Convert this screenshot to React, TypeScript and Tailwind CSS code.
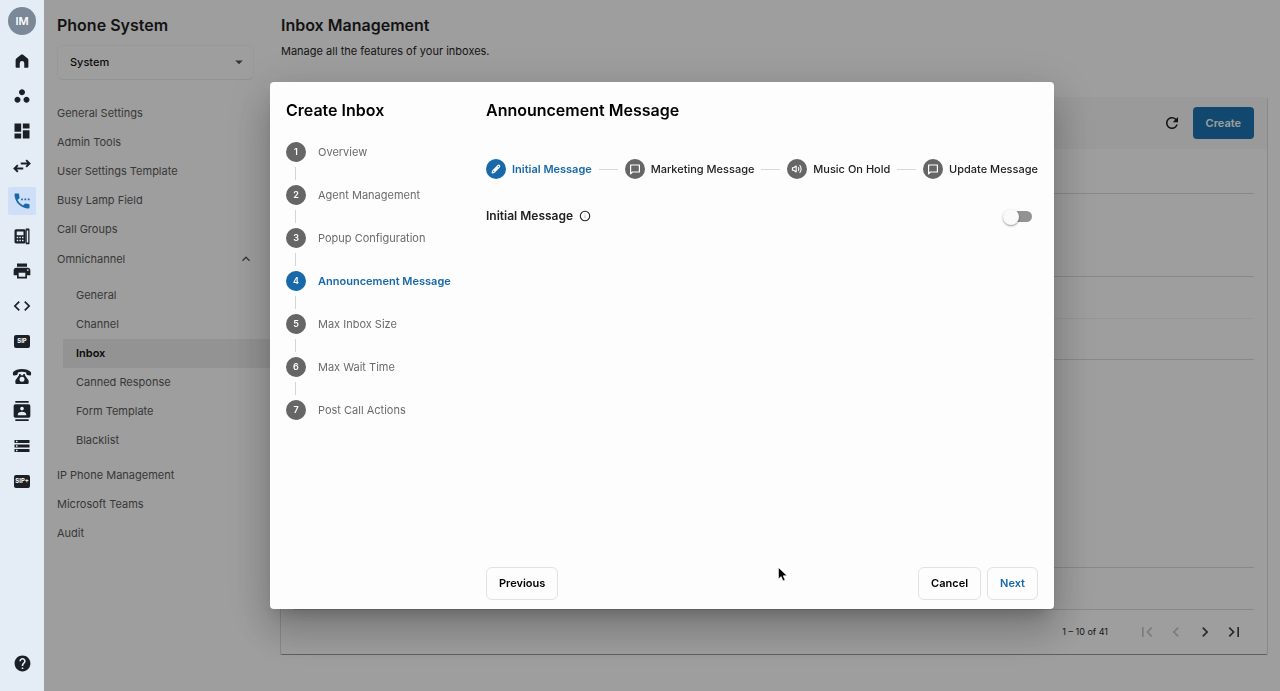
import { Fragment, useState, type ReactNode } from 'react';
import {
  MdArrowDropDown,
  MdChevronLeft,
  MdChevronRight,
  MdCode,
  MdContacts,
  MdDashboard,
  MdExpandLess,
  MdFirstPage,
  MdHelp,
  MdLastPage,
  MdPrint,
  MdRefresh,
  MdSettingsPhone,
  MdStorage,
  MdWorkspaces,
} from 'react-icons/md';

function HomeIcon() {
  return (
    <svg viewBox="0 0 24 24" className="size-[18px]" fill="currentColor">
      <path d="M3.500 10.500c0-.8.3-1.400.9-1.900l6.100-4.800c.9-.7 2.100-.7 3 0l6.100 4.800c.6.500.9 1.100.9 1.900V20c0 .6-.4 1-1 1h-4.500v-6a3 3 0 0 0-6 0v6H4.500c-.6 0-1-.4-1-1z" />
    </svg>
  );
}

function SwapIcon() {
  return (
    <svg viewBox="0 0 24 24" className="size-5" fill="none" stroke="currentColor" strokeWidth="2.300">
      <path d="M10.500 9H21M17 5l4 4-4 4M13.500 15H3M7 11l-4 4 4 4" />
    </svg>
  );
}

function DeskPhoneIcon() {
  return (
    <svg viewBox="0 0 24 24" className="size-[18px]" fill="currentColor">
      <path
        fillRule="evenodd"
        d="M4 3h11c1 0 2 1 2 2v15c0 1-1 2-2 2H4c-1 0-2-1-2-2V5c0-1 1-2 2-2zm1 3v5h9V6zm0 7v2h2v-2zm3.500 0v2h2v-2zm3.500 0v2h2v-2zM5 17v2h2v-2zm3.500 0v2h2v-2zm3.500 0v2h2v-2z"
      />
      <path fillRule="evenodd" d="M17 2h3.500c1 0 1.500.6 1.500 1.500v18c0 .9-.5 1.500-1.500 1.500H17zm1.300 2.500v16h2v-16z" />
    </svg>
  );
}

function TelephoneIcon() {
  return (
    <svg viewBox="0 0 24 24" className="size-5" fill="currentColor">
      <path d="M12 3.500c4.800 0 8.400 1.300 10.300 3.500.7.800.9 1.900.6 2.900l-.3.800c-.2.600-.8.900-1.400.8l-3-.7c-.7-.2-1.100-.7-1.100-1.400V7.800a16 16 0 0 0-10.200 0v1.600c0 .7-.4 1.200-1.100 1.400l-3 .7c-.6.100-1.200-.2-1.400-.8l-.3-.8c-.3-1-.1-2.100.6-2.900C3.600 4.800 7.200 3.500 12 3.500z" />
      <path
        fillRule="evenodd"
        d="M8.500 9.500h2V11h3V9.500h2V11l4.500 6.500V20a1.500 1.500 0 0 1-1.500 1.500h-13A1.500 1.500 0 0 1 4 20v-2.500L8.500 11zm3.500 3.500a3 3 0 1 0 0 6 3 3 0 0 0 0-6z"
      />
    </svg>
  );
}

function PencilIcon() {
  return (
    <svg viewBox="0 0 12 12" className="size-3" fill="none" stroke="currentColor" strokeWidth="1.200" strokeLinejoin="round">
      <path d="M2.200 9.800l.5-2 5.300-5.300c.4-.4 1-.4 1.400 0s.4 1 0 1.500L4.200 9.300zM4 7.900l3.800-3.800" />
    </svg>
  );
}

function BubbleIcon() {
  return (
    <svg viewBox="0 0 12 12" className="size-3" fill="none" stroke="currentColor" strokeWidth="1.200" strokeLinejoin="round">
      <path d="M1.600 10.800V2h8.800v7H3.400z" />
    </svg>
  );
}

function SpeakerIcon() {
  return (
    <svg viewBox="0 0 12 12" className="size-3" fill="none" stroke="currentColor" strokeWidth="1.100" strokeLinejoin="round">
      <path d="M1.400 4.800h1.300L5.200 3v6L2.700 7.200H1.400zM7.200 4.200c.8.800.8 2.800 0 3.600M8.600 2.200c2 2 2 5.600 0 7.600" />
    </svg>
  );
}

function InfoIcon() {
  return (
    <svg viewBox="0 0 12 12" className="size-3" fill="none" stroke="currentColor">
      <circle cx="6" cy="6" r="4.700" strokeWidth="1.100" />
      <path d="M6 5.200v3M6 3.600v.8" strokeWidth="0.800" opacity="0.350" />
    </svg>
  );
}

function SipBadge({ children }: { children: string }) {
  return (
    <span className="flex h-[13px] w-4 items-center justify-center rounded-xs bg-[#1b2027] text-[6px] leading-none font-bold text-white">
      {children}
    </span>
  );
}

const RAIL: { label: string; icon: ReactNode; active?: boolean }[] = [
  { label: 'Home', icon: <HomeIcon /> },
  { label: 'Workspaces', icon: <MdWorkspaces size={18} /> },
  { label: 'Dashboard', icon: <MdDashboard size={20} /> },
  { label: 'Transfers', icon: <SwapIcon /> },
  { label: 'Phone System', icon: <MdSettingsPhone size={20} />, active: true },
  { label: 'Desk Phones', icon: <DeskPhoneIcon /> },
  { label: 'Fax', icon: <MdPrint size={20} /> },
  { label: 'Developer', icon: <MdCode size={20} /> },
  { label: 'SIP Trunks', icon: <SipBadge>SIP</SipBadge> },
  { label: 'Telephones', icon: <TelephoneIcon /> },
  { label: 'Contacts', icon: <MdContacts size={20} /> },
  { label: 'Storage', icon: <MdStorage size={18} /> },
  { label: 'SIP Plus', icon: <SipBadge>SIP+</SipBadge> },
];

const MENU_TOP = ['General Settings', 'Admin Tools', 'User Settings Template', 'Busy Lamp Field', 'Call Groups'];
const MENU_OMNI = ['General', 'Channel', 'Inbox', 'Canned Response', 'Form Template', 'Blacklist'];
const MENU_BOTTOM = ['IP Phone Management', 'Microsoft Teams', 'Audit'];

const STEPS = [
  'Overview',
  'Agent Management',
  'Popup Configuration',
  'Announcement Message',
  'Max Inbox Size',
  'Max Wait Time',
  'Post Call Actions',
];

const MESSAGES = [
  { label: 'Initial Message', icon: <PencilIcon /> },
  { label: 'Marketing Message', icon: <BubbleIcon /> },
  { label: 'Music On Hold', icon: <SpeakerIcon /> },
  { label: 'Update Message', icon: <BubbleIcon /> },
];

// Bottom rule of each table row
const ROW_RULES = [
  'border-transparent',
  'border-[#dcdcdc]',
  'border-[#f2f2f2]',
  'border-[#dcdcdc]',
  'border-transparent',
  'border-transparent',
  'border-transparent',
  'border-transparent',
  'border-[#dcdcdc]',
  'border-[#dcdcdc]',
];

function NavRail() {
  return (
    <nav className="relative z-20 flex w-11 shrink-0 flex-col items-center bg-[#e4ecf6] pt-[7px] pb-[14px] text-[#1b2027]">
      <div className="flex size-7 items-center justify-center rounded-full bg-[#7a8897] text-[11px] font-semibold text-white">
        IM
      </div>
      <ul className="mt-3 flex flex-col gap-[7px]">
        {RAIL.map((item) => (
          <li key={item.label}>
            <a
              href="#"
              aria-label={item.label}
              className={`flex size-7 items-center justify-center rounded-xs ${
                item.active ? 'bg-[#cfdff7] text-[#1769aa]' : ''
              }`}
            >
              {item.icon}
            </a>
          </li>
        ))}
      </ul>
      <a href="#" aria-label="Help" className="mt-auto flex size-7 items-center justify-center">
        <MdHelp size={19} />
      </a>
    </nav>
  );
}

function MenuLink({ label, active }: { label: string; active?: boolean }) {
  return (
    <a
      href="#"
      className={`flex h-[29px] items-center px-[13px] ${
        active ? 'bg-[#ededed] font-semibold text-[#111111]' : 'text-[#5c5c5c]'
      }`}
    >
      {label}
    </a>
  );
}

function Sidebar() {
  const [open, setOpen] = useState(true);
  return (
    <aside className="w-[226px] shrink-0 text-[11px]">
      <h2 className="px-[13px] pt-[13px] text-base leading-6 font-semibold text-[#1f1f1f]">Phone System</h2>
      <div className="relative mx-[13px] mt-2">
        <select
          aria-label="Section"
          className="h-[35px] w-[197px] appearance-none rounded-md border border-[#f6f6f6] border-b-[#ececec] px-3 text-[11px] font-medium text-[#111111]"
        >
          <option>System</option>
        </select>
        <MdArrowDropDown size={18} className="pointer-events-none absolute top-2 right-[9px] text-[#555555]" />
      </div>
      <nav className="mt-[19px]">
        {MENU_TOP.map((label) => (
          <MenuLink key={label} label={label} />
        ))}
        <button
          type="button"
          aria-expanded={open}
          onClick={() => setOpen(!open)}
          className="flex h-[30px] w-full items-center justify-between pr-4 pl-[13px] text-[#5c5c5c]"
        >
          Omnichannel
          <MdExpandLess size={16} />
        </button>
        {open ? (
          <div className="mt-[7px] mb-[6px] ml-[19px]">
            {MENU_OMNI.map((label) => (
              <MenuLink key={label} label={label} active={label === 'Inbox'} />
            ))}
          </div>
        ) : null}
        {MENU_BOTTOM.map((label) => (
          <MenuLink key={label} label={label} />
        ))}
      </nav>
    </aside>
  );
}

function InboxPage() {
  return (
    <main className="flex min-w-0 flex-1 flex-col pr-3 pb-9 pl-[10px] text-[#1f1f1f]">
      <h1 className="pt-[13px] pl-px text-base leading-6 font-semibold">Inbox Management</h1>
      <p className="mt-1 pl-px text-[11px] leading-5">Manage all the features of your inboxes.</p>

      <section className="mt-9 flex flex-1 flex-col rounded-xs border-r border-b border-l border-r-[#dddddd] border-b-[#9b9b9b] border-l-[#dddddd]">
        <div className="flex h-[52px] items-center justify-end gap-[11px] bg-[#f8f8f8] pr-[13px]">
          <button type="button" aria-label="Refresh" className="p-px">
            <MdRefresh size={18} />
          </button>
          <button type="button" className="h-8 rounded-sm bg-[#1c75b4] px-[13px] text-[11px] font-semibold text-white">
            Create
          </button>
        </div>
        <div className="mx-[13px] h-[45px] border-b border-[#dcdcdc]" />
        <div className="mx-[13px] grid flex-1 grid-rows-10">
          {ROW_RULES.map((rule, i) => (
            <div key={i} className={`border-b ${rule}`} />
          ))}
        </div>
        <div className="flex h-11 items-center justify-end pr-[23px] text-[9px]">
          <span className="mr-[29px]">1 – 10 of 41</span>
          <div className="flex gap-[9px] text-[#444444]">
            <button type="button" aria-label="First page" disabled className="text-[#c8c8c8]">
              <MdFirstPage size={20} />
            </button>
            <button type="button" aria-label="Previous page" disabled className="text-[#c8c8c8]">
              <MdChevronLeft size={20} />
            </button>
            <button type="button" aria-label="Next page">
              <MdChevronRight size={20} />
            </button>
            <button type="button" aria-label="Last page">
              <MdLastPage size={20} />
            </button>
          </div>
        </div>
      </section>
    </main>
  );
}

function StepList({ current }: { current: number }) {
  return (
    <ol className="mt-5">
      {STEPS.map((label, i) => (
        <li key={label}>
          {i > 0 ? <div className="my-[5px] ml-[9px] h-[13px] w-px bg-[#d4d4d4]" /> : null}
          <div
            className={`flex items-center gap-3 text-[11px] ${
              i === current ? 'font-semibold text-[#1769aa]' : 'text-[#6b6b6b]'
            }`}
          >
            <span
              className={`flex size-5 items-center justify-center rounded-full text-[9px] font-semibold text-white ${
                i === current ? 'bg-[#1769aa]' : 'bg-[#666666]'
              }`}
            >
              {i + 1}
            </span>
            {label}
          </div>
        </li>
      ))}
    </ol>
  );
}

function MessageTabs() {
  return (
    <div className="mt-[37px] flex items-center text-[11px] font-medium whitespace-nowrap">
      {MESSAGES.map((m, i) => (
        <Fragment key={m.label}>
          {i > 0 ? <div className="mx-[7px] h-px flex-1 bg-[#d8d8d8]" /> : null}
          <button
            type="button"
            className={`flex items-center gap-[6px] ${i === 0 ? 'font-semibold text-[#1769aa]' : 'text-[#222222]'}`}
          >
            <span
              className={`flex size-5 items-center justify-center rounded-full text-white ${
                i === 0 ? 'bg-[#1769aa]' : 'bg-[#666666]'
              }`}
            >
              {m.icon}
            </span>
            {m.label}
          </button>
        </Fragment>
      ))}
    </div>
  );
}

const FOOTER_BUTTON = 'h-[33px] rounded-md border border-[#e2e2e2] px-3 text-[11px] font-semibold';

function CreateInboxDialog() {
  return (
    <div
      role="dialog"
      aria-label="Create Inbox"
      className="relative flex h-[527px] w-[784px] rounded-sm bg-[#fdfdfd] shadow-[0_11px_15px_-7px_rgba(0,0,0,0.2),0_24px_38px_3px_rgba(0,0,0,0.14),0_9px_46px_8px_rgba(0,0,0,0.12)]"
    >
      <div className="w-[200px] shrink-0 px-4 pt-4">
        <h2 className="text-base leading-6 font-semibold text-black">Create Inbox</h2>
        <StepList current={3} />
      </div>
      <div className="flex min-w-0 flex-1 flex-col px-4 pt-4 pb-[9px]">
        <h2 className="text-base leading-6 font-semibold text-black">Announcement Message</h2>
        <MessageTabs />
        <div className="mt-[27px] flex items-center justify-between">
          <label htmlFor="initial-message" className="flex items-center gap-[6px] text-xs leading-5 font-semibold text-[#222222]">
            Initial Message
            <InfoIcon />
          </label>
          <input
            id="initial-message"
            type="checkbox"
            role="switch"
            className="relative mr-[6px] h-[11px] w-6 appearance-none rounded-full bg-[#929292] before:absolute before:-top-[2px] before:-left-[5px] before:size-4 before:rounded-full before:bg-[#fafafa] before:shadow-[0_1px_2px_rgba(0,0,0,0.4)] checked:before:left-3"
          />
        </div>
        <div className="mt-auto flex gap-[6px]">
          <button type="button" className={`${FOOTER_BUTTON} mr-auto text-black`}>
            Previous
          </button>
          <button type="button" className={`${FOOTER_BUTTON} text-black`}>
            Cancel
          </button>
          <button type="button" className={`${FOOTER_BUTTON} text-[#1769aa]`}>
            Next
          </button>
        </div>
      </div>
      {/* pointer */}
      <svg viewBox="0 0 12 18" className="absolute top-[485px] left-[508px] h-[15px] w-[10px]">
        <path d="M.5.5v14l3.300-3 2.200 5.200 2.500-1.100-2.200-5h4.700z" fill="#000" stroke="#fff" strokeWidth="0.800" />
      </svg>
    </div>
  );
}

export default function App() {
  return (
    <div className="flex min-h-screen bg-white font-[Inter,sans-serif]">
      <NavRail />
      <Sidebar />
      <InboxPage />
      <div className="fixed inset-y-0 right-0 left-11 z-10 flex items-center justify-center bg-black/[0.38]">
        <CreateInboxDialog />
      </div>
    </div>
  );
}
